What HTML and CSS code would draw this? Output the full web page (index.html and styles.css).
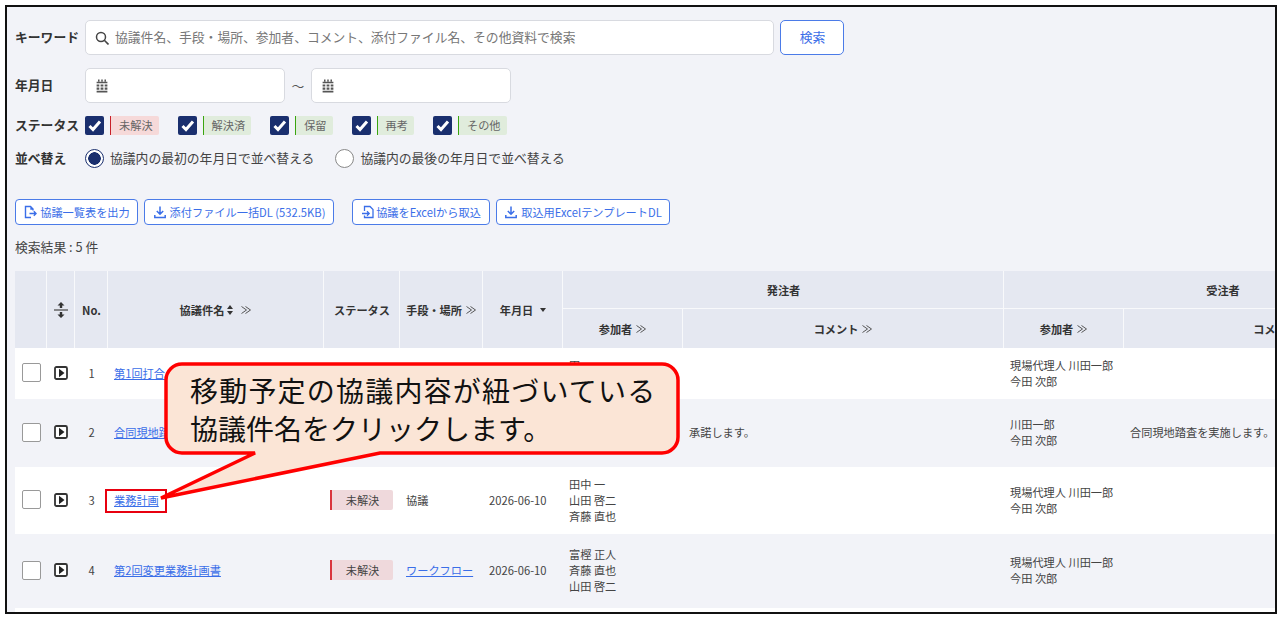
FILE: index.html
```html
<!DOCTYPE html>
<html lang="ja">
<head>
  <meta charset="UTF-8">
  <title>協議一覧</title>
  <link rel="stylesheet" href="styles.css">
</head>
<body>

  <svg class="defs" width="0" height="0">
    <symbol id="i-double" viewBox="0 0 12 12"><path d="M1.500 2.500l5 3.500-5 3.500M5.500 2.500l5 3.500-5 3.500" fill="none" stroke="#555" stroke-width="1"/></symbol>
    <symbol id="i-cal" viewBox="1.500 0.500 11 13"><path d="M4 1v2M7 1v2M10 1v2" stroke="#555" stroke-width="1.4" fill="none"/><path d="M2 3h10v1.500H2zM2 5.500h2.500v2H2zM5.700 5.500h2.600v2H5.700zM9.500 5.500H12v2H9.500zM2 8.500h2.500v2H2zM5.700 8.500h2.600v2H5.700zM9.500 8.500H12v2H9.500zM2 11.500h10V13H2z" fill="#555"/></symbol>
    <symbol id="i-check" viewBox="0 0 19 19"><path d="M4.500 10l3.500 3.500L15 5.500" fill="none" stroke="#fff" stroke-width="3"/></symbol>
    <symbol id="i-down" viewBox="0 0 14 14"><path d="M7 1.500v7.500M3.800 6L7 9.200 10.200 6M1.800 10v2.500h10.400V10" fill="none" stroke="#3a6ee8" stroke-width="1.500"/></symbol>
    <symbol id="i-play" viewBox="0 0 14 14"><rect x="1" y="1" width="12" height="12" rx="1.500" fill="#fff" stroke="#333" stroke-width="1.800"/><path d="M5 2.800L10.500 7 5 11.200z" fill="#222"/></symbol>
  </svg>

  <div class="frame">
    <div class="filter-row">
      <span class="filter-label">キーワード</span>
      <div class="input input-keyword">
        <svg class="input-icon" width="14" height="14" viewBox="0 0 14 14"><circle cx="6" cy="6" r="4.500" fill="none" stroke="#444" stroke-width="1.500"/><path d="M9.300 9.300L13.500 13.500" stroke="#444" stroke-width="1.600"/></svg>
        <span class="placeholder">協議件名、手段・場所、参加者、コメント、添付ファイル名、その他資料で検索</span>
      </div>
      <button class="btn-search">検索</button>
    </div>

    <div class="filter-row">
      <span class="filter-label">年月日</span>
      <div class="input input-date"><svg class="input-icon" width="14" height="14"><use href="#i-cal"/></svg></div>
      <span class="tilde">～</span>
      <div class="input input-date"><svg class="input-icon" width="14" height="14"><use href="#i-cal"/></svg></div>
    </div>

    <div class="filter-row status-row">
      <span class="filter-label">ステータス</span>
      <span class="status-item"><span class="checkbox"><svg width="19" height="19"><use href="#i-check"/></svg></span><span class="tag tag-red">未解決</span></span>
      <span class="status-item"><span class="checkbox"><svg width="19" height="19"><use href="#i-check"/></svg></span><span class="tag tag-green">解決済</span></span>
      <span class="status-item"><span class="checkbox"><svg width="19" height="19"><use href="#i-check"/></svg></span><span class="tag tag-green">保留</span></span>
      <span class="status-item"><span class="checkbox"><svg width="19" height="19"><use href="#i-check"/></svg></span><span class="tag tag-green">再考</span></span>
      <span class="status-item"><span class="checkbox"><svg width="19" height="19"><use href="#i-check"/></svg></span><span class="tag tag-green">その他</span></span>
    </div>

    <div class="filter-row sort-row">
      <span class="filter-label">並べ替え</span>
      <span class="radio-item"><span class="radio radio-on"></span><span class="radio-text">協議内の最初の年月日で並べ替える</span></span>
      <span class="radio-item"><span class="radio"></span><span class="radio-text">協議内の最後の年月日で並べ替える</span></span>
    </div>

    <div class="actions">
      <button class="btn-action btn-export">
        <svg width="14" height="14" viewBox="0 0 14 14"><path d="M8 12.500H2.500v-11h5l2.500 2.500v1.500M8 1.500V4h2.500M6.500 8.500h6.500M10.800 6.300L13 8.500l-2.200 2.200" fill="none" stroke="#3a6ee8" stroke-width="1.400"/></svg>
        協議一覧表を出力
      </button>
      <button class="btn-action btn-attach"><svg width="14" height="14"><use href="#i-down"/></svg>添付ファイル一括DL (532.5KB)</button>
      <button class="btn-action btn-import">
        <svg width="14" height="14" viewBox="0 0 14 14"><path d="M3.500 6V1.500h5.500L12 4.500v8H3.500V10.500M1 8.500h7M6 6.300l2.200 2.200L6 10.700" fill="none" stroke="#3a6ee8" stroke-width="1.300"/></svg>
        協議をExcelから取込
      </button>
      <button class="btn-action btn-template"><svg width="14" height="14"><use href="#i-down"/></svg>取込用ExcelテンプレートDL</button>
    </div>

    <p class="result-count">検索結果 : 5 件</p>

    <table class="list">
      <colgroup>
        <col class="c-check"><col class="c-open"><col class="c-no"><col class="c-name"><col class="c-status">
        <col class="c-means"><col class="c-date"><col class="c-member"><col class="c-comment"><col class="c-member"><col class="c-comment2">
      </colgroup>
      <thead>
        <tr class="head-top">
          <th rowspan="2"></th>
          <th rowspan="2">
            <svg class="sort-all" width="14" height="18" viewBox="0 0 14 18"><path d="M7 1l3.500 3.500H8.200v2.500H5.800V4.500H3.500zM7 17l3.500-3.500H8.200V11H5.800v2.500H3.500z" fill="#333"/><path d="M0 9h14" stroke="#444" stroke-width="1.200"/></svg>
          </th>
          <th rowspan="2">No.</th>
          <th rowspan="2">
            <span class="th-inner">協議件名
              <svg width="6" height="10" viewBox="0 0 6 10"><path d="M3 0l3 4H0zM3 10l3-4H0z" fill="#333"/></svg>
              <svg class="dbl-wide" width="12" height="12"><use href="#i-double"/></svg>
            </span>
          </th>
          <th rowspan="2">ステータス</th>
          <th rowspan="2"><span class="th-inner">手段・場所<svg width="12" height="12"><use href="#i-double"/></svg></span></th>
          <th rowspan="2">
            <span class="th-inner">年月日
              <svg class="caret" width="6" height="4" viewBox="0 0 6 4"><path d="M0 0h6L3 4z" fill="#333"/></svg>
            </span>
          </th>
          <th colspan="2">発注者</th>
          <th colspan="2">受注者</th>
        </tr>
        <tr class="head-sub">
          <th><span class="th-inner">参加者<svg width="12" height="12"><use href="#i-double"/></svg></span></th>
          <th><span class="th-inner">コメント<svg width="12" height="12"><use href="#i-double"/></svg></span></th>
          <th><span class="th-inner">参加者<svg width="12" height="12"><use href="#i-double"/></svg></span></th>
          <th><span class="th-inner">コメント<svg width="12" height="12"><use href="#i-double"/></svg></span></th>
        </tr>
      </thead>
      <tbody>
        <tr class="row-1">
          <td class="center"><span class="row-check"></span></td>
          <td class="center"><svg class="play" width="14" height="14"><use href="#i-play"/></svg></td>
          <td class="center">1</td>
          <td><a href="#">第1回打合</a></td>
          <td></td>
          <td></td>
          <td></td>
          <td>田<br>&nbsp;</td>
          <td></td>
          <td>現場代理人 川田一郎<br>今田 次郎</td>
          <td></td>
        </tr>
        <tr class="row-2">
          <td class="center"><span class="row-check"></span></td>
          <td class="center"><svg class="play" width="14" height="14"><use href="#i-play"/></svg></td>
          <td class="center">2</td>
          <td><a href="#">合同現地踏</a></td>
          <td></td>
          <td></td>
          <td></td>
          <td></td>
          <td>承諾します。</td>
          <td>川田一郎<br>今田 次郎</td>
          <td>合同現地踏査を実施します。</td>
        </tr>
        <tr class="row-3">
          <td class="center"><span class="row-check"></span></td>
          <td class="center"><svg class="play" width="14" height="14"><use href="#i-play"/></svg></td>
          <td class="center">3</td>
          <td><a href="#">業務計画</a></td>
          <td><span class="row-tag">未解決</span></td>
          <td>協議</td>
          <td>2026-06-10</td>
          <td>田中 一<br>山田 啓二<br>斉藤 直也</td>
          <td></td>
          <td>現場代理人 川田一郎<br>今田 次郎</td>
          <td></td>
        </tr>
        <tr class="row-4">
          <td class="center"><span class="row-check"></span></td>
          <td class="center"><svg class="play" width="14" height="14"><use href="#i-play"/></svg></td>
          <td class="center">4</td>
          <td><a href="#">第2回変更業務計画書</a></td>
          <td><span class="row-tag">未解決</span></td>
          <td><a href="#">ワークフロー</a></td>
          <td>2026-06-10</td>
          <td>富樫 正人<br>斉藤 直也<br>山田 啓二</td>
          <td></td>
          <td>現場代理人 川田一郎<br>今田 次郎</td>
          <td></td>
        </tr>
        <tr class="row-5">
          <td colspan="11"></td>
        </tr>
      </tbody>
    </table>

    <!-- 説明の吹き出し -->
    <div class="marker"></div>
    <div class="callout">
      <svg class="callout-shape" width="530" height="145" viewBox="0 0 530 145">
        <path d="M27 6H507A16 16 0 0 1 523 22V79A16 16 0 0 1 507 95H225L6 140L100 95H27A16 16 0 0 1 11 79V22A16 16 0 0 1 27 6Z" fill="#fbe5d6" stroke="#f00" stroke-width="3.500"/>
      </svg>
      <p class="callout-text"><span class="callout-line1">移動予定の協議内容が紐づいている</span><br><span class="callout-line2">協議件名をクリックします。</span></p>
    </div>
  </div>

</body>
</html>
```

FILE: styles.css
```css
html, body { margin: 0; padding: 0; height: 100%; overflow: hidden; background: #fff; }
body { font-family: "Noto Sans CJK JP", "Noto Sans", sans-serif; font-size: 12.8px; color: #333; }
.defs { position: absolute; }

.frame { position: relative; box-sizing: border-box; width: 1272px; height: 609px; margin: 5px 0 0 5px; padding: 13px 0 0 8px; border: 2px solid #111; background: #f2f3f8; overflow: hidden; }

.filter-row { display: flex; align-items: center; margin-bottom: 13px; }
.filter-label { flex: none; width: 70px; padding-bottom: 2px; font-weight: bold; }

.input { box-sizing: border-box; display: flex; align-items: center; height: 35px; padding-left: 9px; background: #fff; border: 1px solid #d8dae0; border-radius: 5px; }
.input-keyword { width: 689px; }
.input-date { width: 200px; }
.input-icon { flex: none; }
.placeholder { margin-left: 6px; padding-bottom: 2px; color: #777; }
.tilde { width: 26px; text-align: center; color: #555; }

.btn-search { width: 64px; height: 35px; margin-left: 6px; padding: 0 0 2px 1px; font: inherit; color: #3a6ee8; background: #fff; border: 1px solid #4b7be8; border-radius: 5px; }

.status-row { height: 19px; }
.status-item { display: flex; align-items: center; margin-right: 19px; }
.checkbox { width: 19px; height: 19px; background: #1a2f6e; border-radius: 2px; }
.checkbox svg { display: block; }
.tag { height: 19px; margin-left: 6px; padding: 0 6px 0 8px; font-size: 11.2px; line-height: 19px; color: #666; border-left: 1px solid; border-radius: 0 2px 2px 0; }
.tag-red { background: #f6d9d9; border-color: #c8202a; }
.tag-green { background: #e0ecdc; border-color: #3aa50f; }

.sort-row { height: 19px; margin-top: 14px; margin-bottom: 31px; }
.radio-item { display: flex; align-items: center; margin-right: 21px; color: #444; }
.radio { box-sizing: border-box; width: 19px; height: 19px; margin-right: 6px; background: #fff; border: 1px solid #888; border-radius: 50%; }
.radio-on { border: 1px solid #1a2f6e; background: radial-gradient(circle, #1a2f6e 0 6px, #fff 6.5px); }
.radio-text { padding-bottom: 2px; }

.actions { display: flex; height: 26px; }
.btn-action { box-sizing: border-box; display: flex; align-items: center; justify-content: center; gap: 3px; height: 26px; margin-right: 6px; padding: 0; font: inherit; font-size: 11.2px; color: #3a6ee8; background: #fff; border: 1px solid #4b7be8; border-radius: 4px; white-space: nowrap; }
.btn-export { width: 123px; }
.btn-attach { width: 190px; margin-right: 18px; }
.btn-import { width: 138px; gap: 1px; }
.btn-template { width: 174px; }

.result-count { height: 18px; margin: 13px 0 15px; font-size: 12.8px; line-height: 18px; color: #444; }

.list { width: 1427px; table-layout: fixed; border-collapse: separate; border-spacing: 0; font-size: 11.2px; line-height: 16px; }
.c-check { width: 32px; }
.c-open { width: 28px; }
.c-no { width: 33px; }
.c-name { width: 216px; }
.c-status { width: 76px; }
.c-means { width: 83px; }
.c-date { width: 80px; }
.c-member { width: 120px; }
.c-comment { width: 321px; }
.c-comment2 { width: 318px; }

.list th { box-sizing: border-box; padding: 0 0 0 1px; background: #e5e8f1; border-right: 1px solid #f8f9fb; font-weight: bold; text-align: center; color: #333; }
.head-top { height: 38px; }
.head-top th[colspan] { border-bottom: 1px solid #f8f9fb; }
.head-sub { height: 39px; }
.th-inner { display: inline-flex; align-items: center; gap: 3px; }
.dbl-wide { margin-left: 4px; }
.caret { margin-left: 4px; }
.sort-all { display: block; margin: 0 auto; }

.list td { box-sizing: border-box; padding: 0 6px 2px; vertical-align: middle; color: #444; }
.list td.center { padding: 0 0 2px; text-align: center; }
.list a { color: #3a6ee8; }
.row-1 td { height: 51px; background: #fff; }
.row-2 td { height: 68px; }
.row-3 td { height: 67px; background: #fff; }
.row-4 td { height: 74px; }
.row-5 td { height: 60px; background: #fff; }

.row-check { display: block; box-sizing: border-box; width: 19px; height: 19px; margin: 0 auto; background: #fff; border: 1px solid #999; border-radius: 2px; }
.play { display: block; margin: 0 auto; }
.row-tag { display: block; box-sizing: border-box; width: 63px; height: 20px; line-height: 20px; text-align: center; background: #efd9dc; border-left: 2px solid #d9363e; border-radius: 0 2px 2px 0; color: #444; }

.marker { position: absolute; left: 98px; top: 482px; width: 62px; height: 24px; box-sizing: border-box; border: 2.500px solid #e8000f; }

.callout { position: absolute; left: 148px; top: 351px; width: 530px; height: 145px; }
.callout-shape { display: block; }
.callout-text { position: absolute; left: 35px; top: 13px; margin: 0; font-size: 28px; line-height: 38px; color: #111; white-space: nowrap; }
.callout-line1 { letter-spacing: 1.2px; }
.callout-line2 { letter-spacing: 0; }
```
